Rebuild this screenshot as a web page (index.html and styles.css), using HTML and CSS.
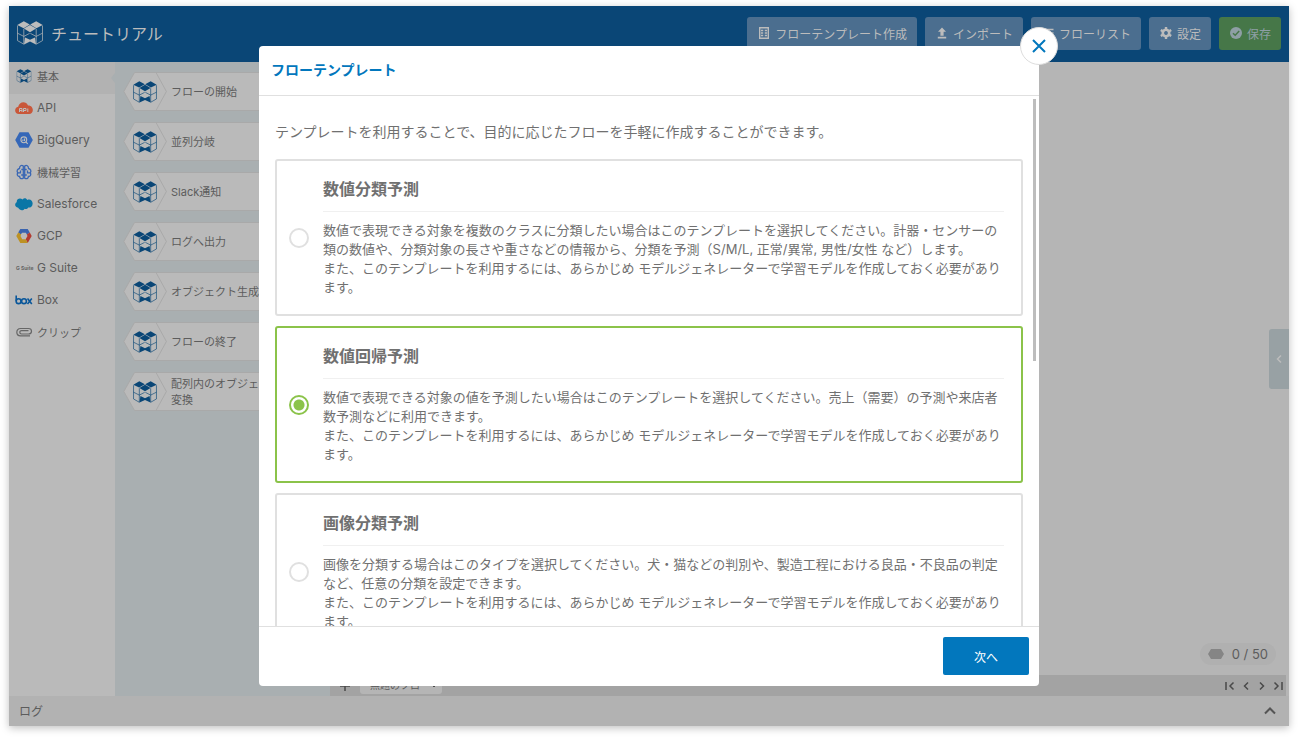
FILE: index.html
```
<!DOCTYPE html>
<html lang="ja">
<head>
  <meta charset="UTF-8" />
  <meta name="viewport" content="width=device-width, initial-scale=1.0"/>
  <title>チュートリアル</title>
  <link rel="stylesheet" href="styles.css">
</head>
<body>

<svg class="defs" aria-hidden="true">
  <symbol id="cube" viewBox="0 0 26 24">
    <path fill="currentColor" d="M0.3 4 6.8 0.3 12.8 3.5 6.6 7.2zM13.2 3.5 19.2 0.3 25.7 4 19.4 7.2zM6.9 7.5 13 4.1 19.1 7.5 13 11.2zM7 23.4 8 16.4 13 18.7 18 16.4 19 23.4 13 20.6z"/>
    <path fill="none" stroke="currentColor" stroke-width="0.7" d="M0.5 4.6V19.6L6.8 23.2V8M0.5 12.2 6.8 15.4 12.6 12.4M13.4 12.4 19.2 15.400 25.5 12.2M25.5 4.6V19.6L19.2 23.2V8"/>
  </symbol>
  <symbol id="hex" viewBox="0 0 44 39">
    <path fill="#bababa" d="M44 0.5H11.5L0.8 19.5 11.5 38.5H44z"/>
    <path fill="none" stroke="#a9a9a9" d="M44 0.5H11.5L0.8 19.5 11.5 38.5H44M33 0.5 43.4 19.5 33 38.5"/>
  </symbol>
</svg>

<div class="app">
  <header class="topbar">
    <svg class="logo"><use href="#cube"/></svg>
    <h1>チュートリアル</h1>
    <div class="actions">
      <button class="btn">
        <svg viewBox="0 0 14 14"><path fill="none" stroke="currentColor" stroke-width="1.4" d="M2.7 1.7H11.3V12.3H2.7zM4 4.5H6.2M7.8 4.5H10M4 7H6.2M7.8 7H10M4 9.5H6.2M7.8 9.5H10"/></svg>
        フローテンプレート作成
      </button>
      <button class="btn">
        <svg viewBox="0 0 14 14"><path fill="currentColor" d="M7 1.5 11 5.8H8.6V9.8H5.4V5.8H3zM2.8 10.8H11.2V12.4H2.8z"/></svg>
        インポート
      </button>
      <button class="btn">
        <svg viewBox="0 0 14 14"><path stroke="currentColor" stroke-width="1.5" d="M1.5 3.5H12.5M1.5 7H12.5M1.5 10.5H12.5"/></svg>
        フローリスト
      </button>
      <button class="btn">
        <svg viewBox="0 0 14 14"><path fill="none" stroke="currentColor" stroke-width="2.6" d="M7 3.8A3.2 3.2 0 1 1 6.99 3.8z"/><path stroke="currentColor" stroke-width="2.4" d="M7 1V3.2M7 10.8V13M1.8 4 3.7 5.1M10.3 8.9 12.2 10M1.8 10 3.7 8.9M10.3 5.1 12.2 4"/></svg>
        設定
      </button>
      <button class="btn save">
        <svg viewBox="0 0 14 14"><circle cx="7" cy="7" r="6" fill="currentColor"/><path fill="none" stroke="#467748" stroke-width="1.5" d="M4 7.2 6.2 9.3 10.2 5"/></svg>
        保存
      </button>
    </div>
  </header>

  <div class="workspace">
    <nav class="categories">
      <a href="#" class="active">
        <svg class="blue" viewBox="0 0 26 24"><use href="#cube"/></svg>基本</a>
      <a href="#" class="latin">
        <svg viewBox="0 0 18 16"><path fill="#c9573a" d="M4 14C-1 14-1 7.5 3.2 6.8 4 1.6 11 .4 13 5.4 19 5 19.5 14 14 14z"/><path fill="none" stroke="#bcbcbc" d="M4.5 12V8.5H7V12M4.5 10.5H7M8.500 12V8.5H11V10.5H8.5M12.8 8.5V12"/></svg>API</a>
      <a href="#" class="latin">
        <svg viewBox="0 0 18 16"><path fill="#3567b8" d="M4.5 0.2H13.5L17.8 8 13.5 15.8H4.5L0.2 8z"/><circle cx="8.8" cy="7.8" r="2.9" fill="none" stroke="#bcbcbc" stroke-width="1.1"/><path stroke="#bcbcbc" stroke-width="1.1" d="M11 10 12.7 11.8M7.9 7.5V9M9.5 6.6V9"/></svg>BigQuery</a>
      <a href="#">
        <svg viewBox="0 0 18 16"><g fill="none" stroke="#3a67b4" stroke-width="1.3"><path d="M8.3 2V14.2C6 15.5 4.5 14 4.6 12.5 2.5 12.5 1.6 10.5 2.7 8.8 1.4 7 2.5 4.8 4.5 4.5 4.5 1.8 6.5 .6 8.3 2z"/><path d="M9.7 2V14.2C12 15.5 13.5 14 13.4 12.5 15.5 12.5 16.4 10.5 15.3 8.8 16.6 7 15.5 4.8 13.5 4.5 13.5 1.8 11.5 .6 9.7 2z"/><path d="M2.7 8.8H5.500V6.5M15.3 8.8H12.5V6.5M8.3 5.5H6.3M9.7 5.5H11.7M8.3 11H6.2M9.7 11H11.8"/></g></svg>機械学習</a>
      <a href="#" class="latin">
        <svg viewBox="0 0 18 16"><path fill="#0a76a6" d="M3.2 11.8C-.8 11-.4 7 1.8 6.3 1.2 2.5 5.5 1.3 7.5 3.5 9.2 1.5 11.4 2.2 12.2 4 15.5 2.5 18 5.2 17.6 8 17.3 11 14.8 12 13.2 11.5 12.3 13.3 10.7 13.3 9.6 12.8 8 15.2 4.6 14.6 3.2 11.8z"/></svg>Salesforce</a>
      <a href="#" class="latin">
        <svg viewBox="0 0 18 16"><path fill="#3a63ae" d="M5.3 1H12.7L14.8 4.6 12 6.5 10.8 4.7H7.2L5.6 6.5 3.2 4.6z"/><path fill="#b23a30" d="M14.8 4.6 16.7 8 12.7 15 10.7 11.3 12.5 8 11.8 6.5z"/><path fill="#bd9224" d="M3.2 4.6 1.3 8 5.3 15H12.7L10.7 11.3H7.2L5.5 8 6.2 6.5z"/></svg>GCP</a>
      <a href="#" class="latin">
        <svg class="gsuite" viewBox="0 0 18 16"><text x="1" y="10">G Suite</text></svg>G Suite</a>
      <a href="#" class="latin">
        <svg viewBox="0 0 18 16"><g fill="none" stroke="#0a579a" stroke-width="1.6"><path d="M1.2 3.5V9.3"/><circle cx="3.6" cy="9.2" r="2.4"/><circle cx="9" cy="9.2" r="2.4"/><path d="M12.5 6.5 16.8 12M16.8 6.5 12.5 12"/></g></svg>Box</a>
      <a href="#">
        <svg viewBox="0 0 18 16"><path fill="none" stroke="#666" stroke-width="1.2" d="M15 11.8H5.5C.6 11.8.6 4.5 5.5 4.5H13.5C17.5 4.5 17.5 10 13.5 10H6.5C4.2 10 4.2 6.7 6.5 6.7H13.5"/></svg>クリップ</a>
    </nav>

    <div class="palette">
      <div class="node"><div class="node-icon"><svg class="hex"><use href="#hex"/></svg><svg class="mark"><use href="#cube"/></svg></div><div class="node-name">フローの開始</div></div>
      <div class="node"><div class="node-icon"><svg class="hex"><use href="#hex"/></svg><svg class="mark"><use href="#cube"/></svg></div><div class="node-name">並列分岐</div></div>
      <div class="node"><div class="node-icon"><svg class="hex"><use href="#hex"/></svg><svg class="mark"><use href="#cube"/></svg></div><div class="node-name">Slack通知</div></div>
      <div class="node"><div class="node-icon"><svg class="hex"><use href="#hex"/></svg><svg class="mark"><use href="#cube"/></svg></div><div class="node-name">ログへ出力</div></div>
      <div class="node"><div class="node-icon"><svg class="hex"><use href="#hex"/></svg><svg class="mark"><use href="#cube"/></svg></div><div class="node-name">オブジェクト生成</div></div>
      <div class="node"><div class="node-icon"><svg class="hex"><use href="#hex"/></svg><svg class="mark"><use href="#cube"/></svg></div><div class="node-name">フローの終了</div></div>
      <div class="node"><div class="node-icon"><svg class="hex"><use href="#hex"/></svg><svg class="mark"><use href="#cube"/></svg></div><div class="node-name"><span>配列内のオブジェクト<br>変換</span></div></div>
    </div>

    <div class="board">
      <main class="canvas">
        <button class="drawer" aria-label="プロパティを開く"><svg viewBox="0 0 12 12"><path d="M8 2.5 4.5 6 8 9.5"/></svg></button>
        <div class="counter">
          <svg viewBox="0 0 16 10"><path fill="#858585" d="M3 0H13L16 5 13 10H3L0 5z"/></svg>
          0 / 50
        </div>
      </main>
      <div class="tabs">
        <button class="add" aria-label="タブを追加"><svg viewBox="0 0 12 12"><path d="M6 1V11M1 6H11"/></svg></button>
        <button class="tab">無題のフロー<svg viewBox="0 0 8 8"><path d="M2 4 4 6 6 4"/></svg></button>
        <div class="pager">
          <button aria-label="最初"><svg viewBox="0 0 12 12"><path d="M2 2V10M9.5 2.5 6 6 9.5 9.5"/></svg></button>
          <button aria-label="前"><svg viewBox="0 0 12 12"><path d="M8 2.5 4.5 6 8 9.5"/></svg></button>
          <button aria-label="次"><svg viewBox="0 0 12 12"><path d="M4 2.5 7.5 6 4 9.5"/></svg></button>
          <button aria-label="最後"><svg viewBox="0 0 12 12"><path d="M10 2V10M2.5 2.5 6 6 2.5 9.5"/></svg></button>
        </div>
      </div>
    </div>
  </div>

  <footer class="log">
    <span>ログ</span>
    <svg viewBox="0 0 14 14"><path d="M2 10.5 7 5.5 12 10.5"/></svg>
  </footer>

  <div class="overlay">
    <div class="modal" role="dialog" aria-labelledby="modalTitle">
      <button class="close" aria-label="閉じる"><svg viewBox="0 0 16 16"><path d="M2 2 14 14M14 2 2 14"/></svg></button>
      <h2 id="modalTitle">フローテンプレート</h2>
      <div class="modal-body">
        <p class="intro">テンプレートを利用することで、目的に応じたフローを手軽に作成することができます。</p>
        <label class="card">
          <input type="radio" name="template">
          <div class="card-text">
            <h3>数値分類予測</h3>
            <p>数値で表現できる対象を複数のクラスに分類したい場合はこのテンプレートを選択してください。計器・センサーの類の数値や、分類対象の長さや重さなどの情報から、分類を予測（S/M/L, 正常/異常, 男性/女性 など）します。<br>また、このテンプレートを利用するには、あらかじめ モデルジェネレーターで学習モデルを作成しておく必要があります。</p>
          </div>
        </label>
        <label class="card">
          <input type="radio" name="template" checked>
          <div class="card-text">
            <h3>数値回帰予測</h3>
            <p>数値で表現できる対象の値を予測したい場合はこのテンプレートを選択してください。売上（需要）の予測や来店者数予測などに利用できます。<br>また、このテンプレートを利用するには、あらかじめ モデルジェネレーターで学習モデルを作成しておく必要があります。</p>
          </div>
        </label>
        <label class="card">
          <input type="radio" name="template">
          <div class="card-text">
            <h3>画像分類予測</h3>
            <p>画像を分類する場合はこのタイプを選択してください。犬・猫などの判別や、製造工程における良品・不良品の判定など、任意の分類を設定できます。<br>また、このテンプレートを利用するには、あらかじめ モデルジェネレーターで学習モデルを作成しておく必要があります。</p>
          </div>
        </label>
      </div>
      <div class="scroll-thumb"></div>
      <div class="modal-footer"><button class="next">次へ</button></div>
    </div>
  </div>
</div>

</body>
</html>
```
FILE: styles.css
```
* { box-sizing: border-box; }
body { margin: 0; padding: 6px 9px 12px; background: #fff; color: #5c5c5c; font-family: Inter, "Noto Sans CJK JP", sans-serif; font-size: 12px; }
h1, h2, h3, p { margin: 0; }
button { font-family: inherit; font-size: 12px; border: none; padding: 0; cursor: pointer; color: inherit; background: none; }
a { color: inherit; text-decoration: none; }
svg { display: block; flex: none; }
.defs { position: absolute; width: 0; height: 0; }

.app { position: relative; display: flex; flex-direction: column; height: calc(100vh - 18px); box-shadow: 0 2px 8px rgba(0,0,0,0.25); }

.topbar { display: flex; align-items: center; height: 56px; padding: 0 8px 2px; background: #0a4676; color: #bcbcbc; }
.topbar .logo { width: 26px; height: 24px; }
.topbar h1 { margin-left: 8px; font-size: 16px; font-weight: normal; }
.actions { display: flex; gap: 8px; margin-left: auto; }
.btn { display: flex; align-items: center; gap: 4px; height: 33px; padding: 0 10px; border-radius: 3px; background: #4b6e8f; color: #bcbcbc; white-space: nowrap; }
.btn svg { width: 14px; height: 14px; }
.btn.save { background: #467748; color: #8e9fa5; }

.workspace { display: flex; flex: 1; min-height: 0; }
.categories { width: 106px; background: #bababa; }
.categories a { position: relative; display: flex; align-items: center; gap: 4px; height: 32px; padding-left: 6px; padding-bottom: 5px; font-size: 11px; }
.categories a.latin { font-size: 12px; }
.categories svg { width: 18px; height: 16px; }
.categories .blue { color: #0a4676; height: 14px; }
.categories .gsuite { overflow: visible; font-size: 5px; font-weight: bold; fill: #666; }
.categories .active { background: #b2b2b2; }
.categories .active::after { content: ""; position: absolute; right: 0; top: 11px; border: 5px solid transparent; border-left: 0; border-right: 4px solid #a9afb1; }

.palette { display: flex; flex-direction: column; gap: 11px; width: 215px; padding: 10px 8px; background: #a9afb1; }
.node { display: flex; height: 39px; font-size: 11px; line-height: 16px; white-space: nowrap; }
.node-icon { display: grid; width: 44px; place-items: center; }
.node-icon svg { grid-area: 1 / 1; }
.node-icon .hex { width: 44px; height: 39px; }
.node-icon .mark { width: 24px; height: 22px; color: #0a4676; }
.node-name { display: flex; align-items: center; flex: 1; padding-left: 4px; background: #bababa; border: solid #a9a9a9; border-width: 1px 0; }

.board { display: flex; flex-direction: column; flex: 1; background: #b5b5b5; }
.canvas { position: relative; display: flex; flex: 1; align-items: flex-end; justify-content: flex-end; padding: 10px 13px; }
.drawer { position: absolute; right: 0; top: 267px; width: 20px; height: 60px; display: grid; place-items: center; background: #98a1a4; border-radius: 3px 0 0 3px; }
.drawer svg { width: 12px; height: 12px; fill: none; stroke: #bcbcbc; stroke-width: 1.5; }
.counter { display: flex; align-items: center; gap: 8px; height: 22px; padding: 0 8px; border-radius: 11px; background: #b0b0b0; font-size: 13px; }
.counter svg { width: 16px; height: 10px; }
.tabs { display: flex; height: 21px; margin-right: 3px; background: #a3a3a3; }
.tabs svg { width: 12px; height: 12px; fill: none; stroke: #4a4a4a; stroke-width: 1.5; }
.tabs .add { display: grid; place-items: center; width: 30px; }
.tabs .tab { display: flex; align-items: center; justify-content: space-between; width: 82px; height: 19px; padding: 0 4px 0 10px; border-radius: 0 0 3px 3px; background: #b5b5b5; font-size: 10px; white-space: nowrap; }
.tabs .tab svg { width: 8px; height: 8px; stroke-width: 1; }
.pager { display: flex; align-items: center; gap: 4px; margin-left: auto; padding-right: 2px; }

.log { display: flex; align-items: center; justify-content: space-between; height: 30px; padding: 0 12px 2px 10px; background: #b2b2b2; }
.log svg { width: 14px; height: 14px; fill: none; stroke: #555; stroke-width: 2; }

.overlay { position: absolute; inset: 0; display: flex; align-items: center; justify-content: center; }
.modal { position: relative; display: flex; flex-direction: column; width: 780px; max-width: 90%; height: calc(100% - 80px); background: #fff; border-radius: 4px; color: #707070; }
.close { position: absolute; top: -19px; right: -19px; display: grid; place-items: center; width: 38px; height: 38px; border: 1px solid #ddd; border-radius: 50%; background: #fff; }
.close svg { width: 16px; height: 16px; fill: none; stroke: #0277bd; stroke-width: 2; }
.modal h2 { padding: 0 12px; height: 50px; line-height: 48px; border-bottom: 1px solid #e0e0e0; font-size: 14px; color: #0277bd; }
.modal-body { flex: 1; min-height: 0; padding: 24px 16px 0; overflow-y: auto; scrollbar-width: none; }
.intro { margin-bottom: 15px; font-size: 14px; line-height: 24px; }
.card { display: flex; align-items: center; gap: 14px; margin-bottom: 10px; padding: 16px 17px 16px 12px; border: 2px solid #e0e0e0; border-radius: 3px; }
.card:has(input:checked) { border-color: #8bc34a; }
.card input { appearance: none; flex: none; width: 20px; height: 20px; margin: 0; border: 2px solid #e0e0e0; border-radius: 50%; background: #fff; }
.card input:checked { border-color: #8bc34a; background: radial-gradient(circle, #8bc34a 5px, #fff 6px); }
.card-text { flex: 1; }
.card h3 { margin-bottom: 9px; padding-bottom: 10px; border-bottom: 1px solid #f0f0f0; font-size: 16px; line-height: 24px; }
.card p { padding-bottom: 1px; font-size: 13px; line-height: 19px; }
.scroll-thumb { position: absolute; top: 53px; right: 3px; width: 3px; height: 262px; background: #bdbdbd; }
.modal-footer { display: flex; justify-content: flex-end; align-items: flex-start; height: 60px; padding: 10px; border-top: 1px solid #e0e0e0; }
.next { width: 86px; height: 38px; border-radius: 2px; background: #0277bd; color: #fff; }
```
